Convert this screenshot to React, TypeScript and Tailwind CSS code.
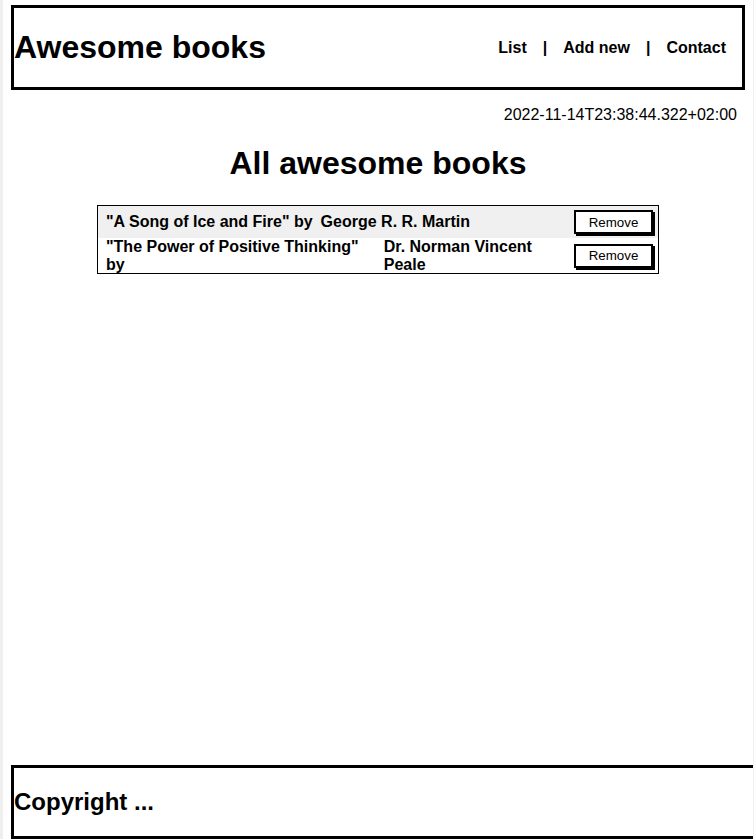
import React from 'react';

const books = [
  { title: 'A Song of Ice and Fire', author: 'George R. R. Martin' },
  { title: 'The Power of Positive Thinking', author: 'Dr. Norman Vincent Peale' },
];

const App = () => {
  return (
    <div className="min-h-screen bg-[#efefef] flex text-black font-['Liberation_Sans',Arial,sans-serif]">
      <div className="ml-[3px] w-[750px] min-h-screen bg-white flex flex-col overflow-hidden">
        {/* Header */}
        <header className="mx-2 mt-[5px] border-[3px] border-black flex items-center justify-between pr-4">
          <h1 className="my-[21px] text-[32px] leading-[37px] font-bold">Awesome books</h1>
          <nav className="flex items-center text-base leading-[18px] font-bold">
            <a href="#list">List</a>
            <span className="mx-4">|</span>
            <a href="#add">Add new</a>
            <span className="mx-4">|</span>
            <a href="#contact">Contact</a>
          </nav>
        </header>

        <p className="mt-4 px-4 text-right text-base leading-[18px]">2022-11-14T23:38:44.322+02:00</p>

        <h2 className="mt-[21px] mb-[23px] text-center text-[32px] leading-[37px] font-bold">All awesome books</h2>

        {/* Book list */}
        <ul className="w-[562px] mx-auto border border-black">
          {books.map((book, i) => (
            <li
              key={book.title}
              className={`flex items-center pl-2 ${i % 2 === 0 ? 'bg-[#f0f0f0]' : 'bg-white'}`}
            >
              <div className="flex gap-2 min-w-0 font-bold text-base leading-[17.5px]">
                <p>"{book.title}" by</p>
                <p>{book.author}</p>
              </div>
              <button
                type="button"
                className="ml-auto mr-[5px] my-1 shrink-0 w-[79px] h-6 bg-white border-2 border-black shadow-[2px_2px_0_#000] text-[13.33px] leading-[15px]"
              >
                Remove
              </button>
            </li>
          ))}
        </ul>

        {/* Footer */}
        <footer className="mt-auto ml-2 border-[3px] border-r-0 border-black">
          <h2 className="my-5 text-2xl leading-7 font-bold">Copyright ...</h2>
        </footer>
      </div>
    </div>
  );
};

export default App;
